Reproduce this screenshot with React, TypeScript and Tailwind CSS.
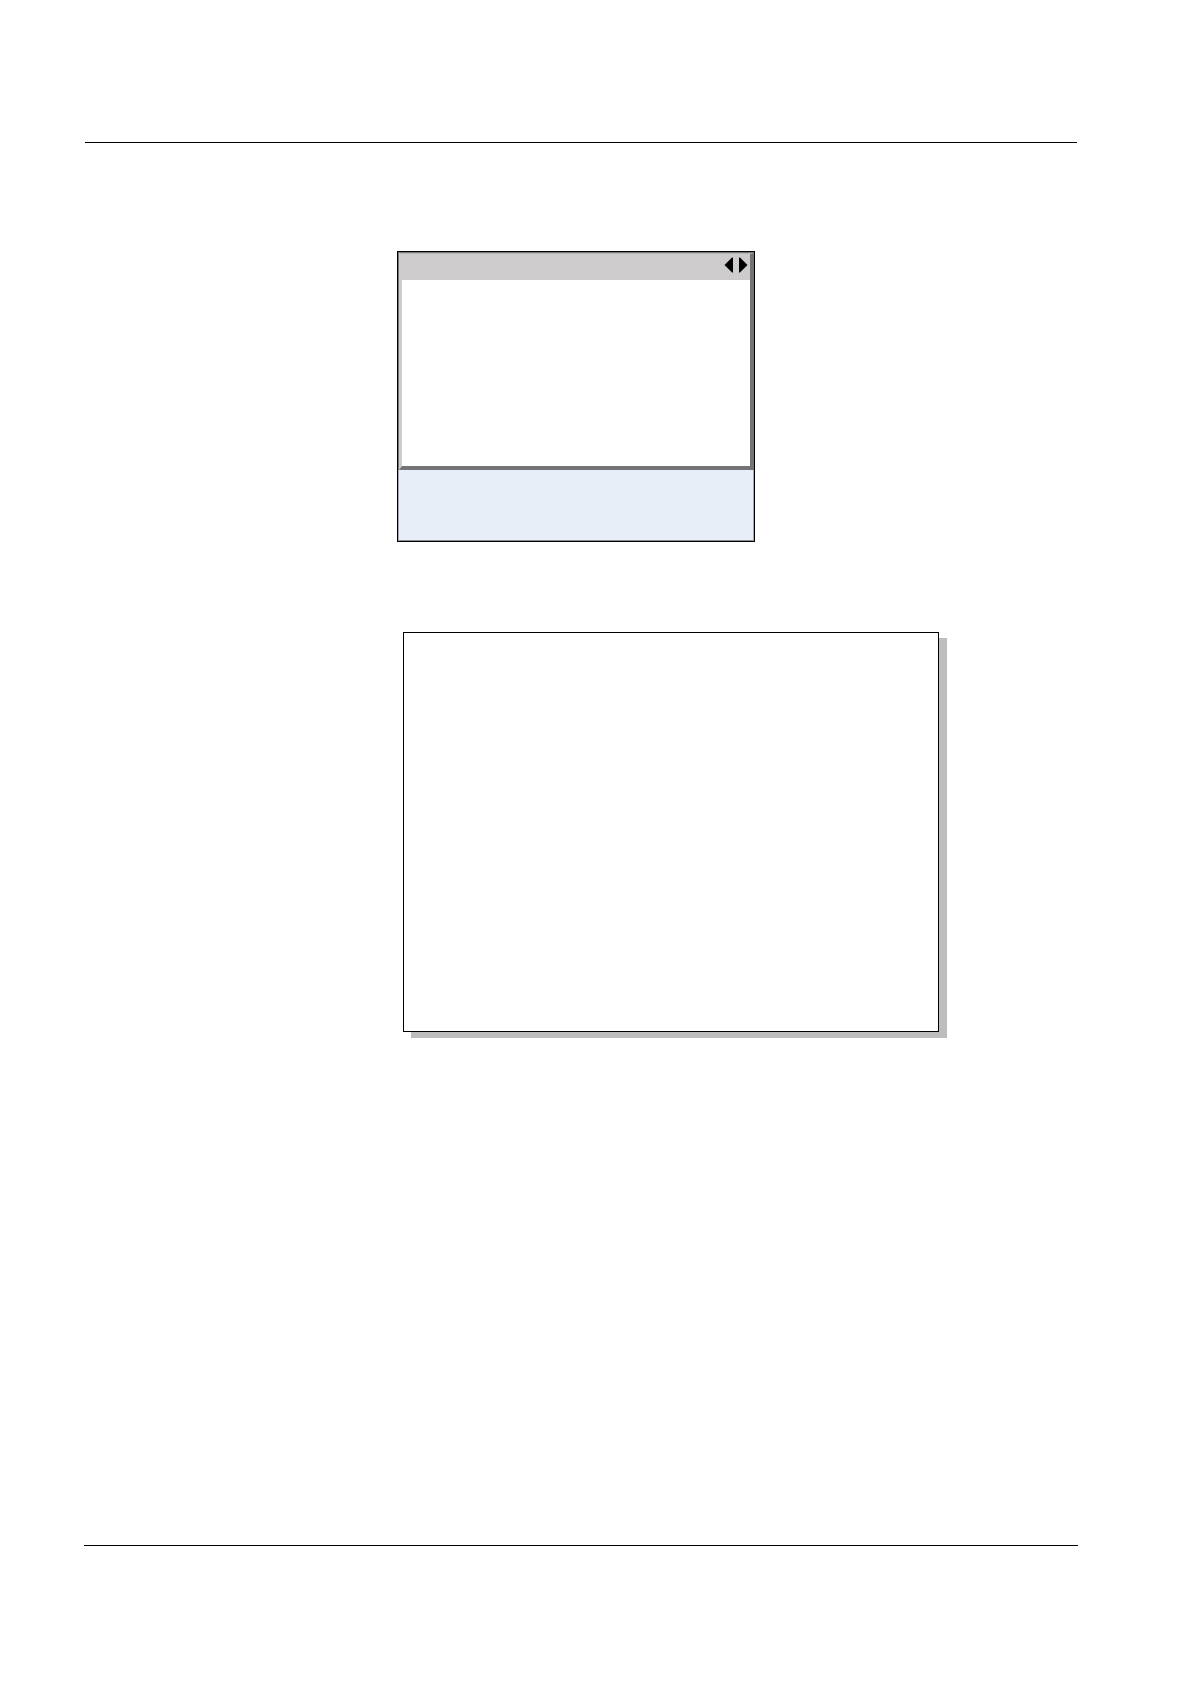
import type { ReactNode } from "react";

type ArrowButtonProps = {
  label: string;
  points: string;
};

function ArrowButton({ label, points }: ArrowButtonProps) {
  return (
    <button type="button" aria-label={label} className="block h-4 w-[9px]">
      <svg viewBox="0 0 9 16" className="h-4 w-[9px]" fill="#000" aria-hidden="true">
        <polygon points={points} />
      </svg>
    </button>
  );
}

// Bevelled screen with a title bar and a soft key area below it
function DisplayPanel() {
  return (
    <section
      aria-label="Display"
      className="w-full max-w-[358px] border border-black"
    >
      <div className="border-t border-l border-t-[#77777a] border-l-[#77777a]">
        <div className="border-t border-r-4 border-b-4 border-l-3 border-t-[#b5b4b6] border-r-[#747376] border-b-[#747376] border-l-[#cdcbcc] bg-white">
          <div className="flex h-[26px] items-start justify-end gap-1.5 bg-[#cdcbcc] pt-[3px] pr-0.5">
            <ArrowButton label="Previous" points="9,0.5 9,15.5 8,15.5 0.5,8 8,0.5" />
            <ArrowButton label="Next" points="0,0.5 1,0.5 8.5,8 1,15.5 0,15.5" />
          </div>
          <div className="h-[186px]" />
        </div>
      </div>
      <div className="h-[71px] border-x border-b border-x-[#a3a8b0] border-b-[#878b92] bg-[#e7eef8]" />
    </section>
  );
}

function ShadowCard({ children }: { children?: ReactNode }) {
  return (
    <section
      aria-label="Details"
      className="h-[400px] w-full max-w-[536px] border border-black bg-white shadow-[8px_6px_0_#bdbdbd]"
    >
      {children}
    </section>
  );
}

export default function App() {
  return (
    <div className="flex min-h-screen flex-col bg-white font-['Liberation_Sans',sans-serif] text-black">
      <header className="mr-[113px] ml-[85px] h-[143px] border-b border-black" />
      <main className="flex-1 pt-[108px] pr-[113px] pl-[397px]">
        <DisplayPanel />
        <div className="pt-[90px] pl-1.5">
          <ShadowCard />
        </div>
      </main>
      <footer className="mr-[112px] ml-[84px] h-[139px] border-t border-black" />
    </div>
  );
}
